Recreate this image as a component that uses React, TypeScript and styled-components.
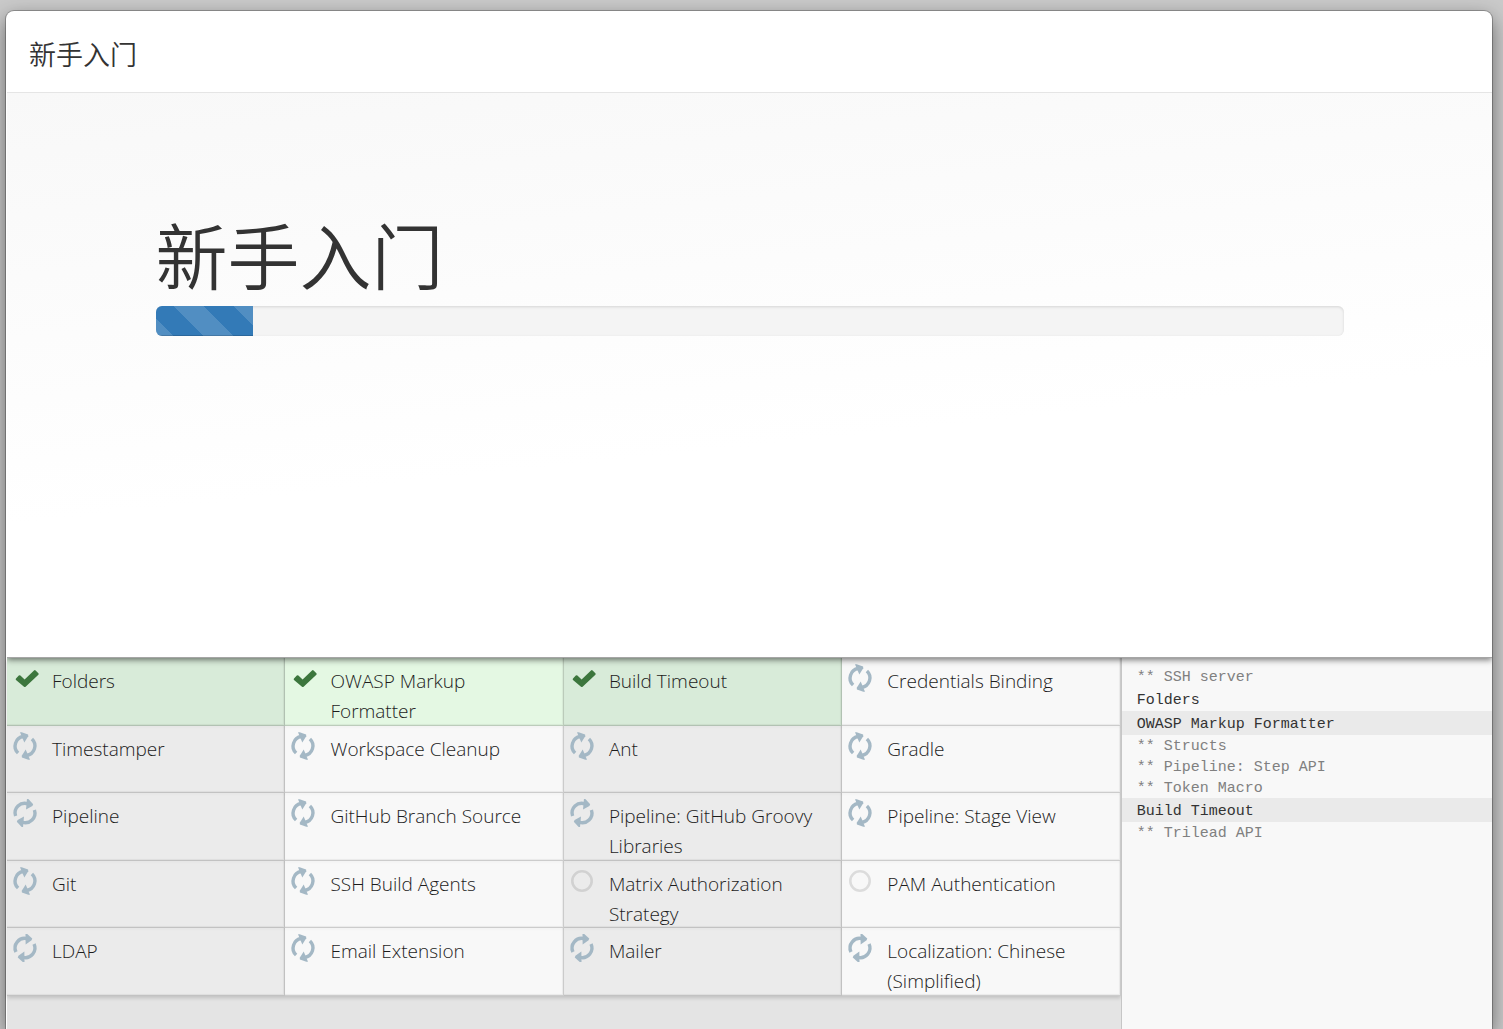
import React from "react";
import styled, { createGlobalStyle } from "styled-components";

type Status = "success" | "installing" | "pending";

interface Plugin {
  name: string;
  status: Status;
  angle?: number;
}

interface LogLine {
  text: string;
  dependency?: boolean;
  shaded?: boolean;
}

const plugins: Plugin[] = [
  { name: "Folders", status: "success" },
  { name: "OWASP Markup Formatter", status: "success" },
  { name: "Build Timeout", status: "success" },
  { name: "Credentials Binding", status: "installing", angle: -28 },
  { name: "Timestamper", status: "installing", angle: -28 },
  { name: "Workspace Cleanup", status: "installing", angle: -28 },
  { name: "Ant", status: "installing", angle: -28 },
  { name: "Gradle", status: "installing", angle: -28 },
  { name: "Pipeline", status: "installing", angle: 0 },
  { name: "GitHub Branch Source", status: "installing", angle: -28 },
  { name: "Pipeline: GitHub Groovy Libraries", status: "installing", angle: 0 },
  { name: "Pipeline: Stage View", status: "installing", angle: -28 },
  { name: "Git", status: "installing", angle: -28 },
  { name: "SSH Build Agents", status: "installing", angle: -28 },
  { name: "Matrix Authorization Strategy", status: "pending" },
  { name: "PAM Authentication", status: "pending" },
  { name: "LDAP", status: "installing", angle: -6 },
  { name: "Email Extension", status: "installing", angle: -28 },
  { name: "Mailer", status: "installing", angle: -6 },
  { name: "Localization: Chinese (Simplified)", status: "installing", angle: -6 },
];

const log: LogLine[] = [
  { text: "** SSH server", dependency: true },
  { text: "Folders" },
  { text: "OWASP Markup Formatter", shaded: true },
  { text: "** Structs", dependency: true },
  { text: "** Pipeline: Step API", dependency: true },
  { text: "** Token Macro", dependency: true },
  { text: "Build Timeout", shaded: true },
  { text: "** Trilead API", dependency: true },
];

const GlobalStyle = createGlobalStyle`
  *, *::before, *::after { box-sizing: border-box; }
  body {
    margin: 0;
    background: #cacaca;
    color: #333;
    font-family: "Open Sans", "Noto Sans CJK SC", sans-serif;
  }
`;

const Page = styled.div`
  display: flex;
  height: 100vh;
  padding: 11px 11px 0 6px;
  overflow: hidden;
`;

const Dialog = styled.main`
  flex: 1;
  min-width: 0;
  display: flex;
  flex-direction: column;
  padding-left: 1px;
  background: #fff;
  border-radius: 8px 8px 0 0;
  box-shadow: 0 0 0 1px rgba(0, 0, 0, 0.25), 0 7px 20px rgba(0, 0, 0, 0.5);
`;

const Header = styled.header`
  padding: 26px 22px 22px;
  border-bottom: 1px solid #e5e5e5;
`;

const HeaderTitle = styled.h4`
  margin: 0;
  font-family: "Noto Sans CJK SC", sans-serif;
  font-size: 27px;
  font-weight: 350;
  line-height: 33px;
`;

const Hero = styled.section`
  position: relative;
  z-index: 1;
  min-height: 565px;
  padding: 124px 10% 0;
  background: linear-gradient(-6deg, #fff 40%, #f8f8f8);
  border-bottom: 1px solid #a6a6a6;
  box-shadow: 0 2px 6px rgba(0, 0, 0, 0.5);
  clip-path: inset(0 0 -10px 0);
`;

const HeroTitle = styled.h1`
  margin: 0 0 17px;
  font-family: "Noto Sans CJK SC", sans-serif;
  font-size: 72px;
  font-weight: 350;
  line-height: 72px;
`;

const Track = styled.div`
  height: 30px;
  overflow: hidden;
  border-radius: 6px;
  background: #f4f4f4;
  box-shadow: inset 0 1px 3px rgba(0, 0, 0, 0.12);
`;

const Bar = styled.div`
  height: 100%;
  background-color: #337ab7;
  background-image: linear-gradient(
    45deg,
    rgba(255, 255, 255, 0.15) 25%,
    transparent 25%,
    transparent 50%,
    rgba(255, 255, 255, 0.15) 50%,
    rgba(255, 255, 255, 0.15) 75%,
    transparent 75%
  );
  background-size: 60px 60px;
  background-position: 18px 0;
  box-shadow: inset 0 -1px 0 rgba(0, 0, 0, 0.15);
`;

const Progress = styled.div`
  flex: 1;
  min-height: 0;
  display: grid;
  grid-template-columns: 3fr 1fr;
`;

const PluginArea = styled.div`
  background: #e4e4e4;
`;

const PluginGrid = styled.ul`
  display: grid;
  grid-template-columns: repeat(4, 1fr);
  grid-template-rows: repeat(5, minmax(0, 1fr));
  height: 338px;
  margin: 0;
  padding: 0;
  list-style: none;
  box-shadow: 0 2px 4px rgba(0, 0, 0, 0.16);
`;

const PluginCell = styled.li<{ $done: boolean }>`
  display: grid;
  grid-template-columns: 24px 1fr;
  column-gap: 15px;
  padding: 8px 24px 0 6px;
  font-size: 19px;
  font-weight: 320;
  line-height: 30px;
  color: #1c1c1c;
  background: ${(p) => (p.$done ? "#e4f8e3" : "#f8f8f8")};
  box-shadow: inset -1px -1px 0 rgba(0, 0, 0, 0.12),
    inset -2px -2px 1px rgba(0, 0, 0, 0.06), inset 0 2px 2px rgba(0, 0, 0, 0.02);

  &:nth-child(odd) {
    background: ${(p) => (p.$done ? "#d8ebd9" : "#ebebeb")};
  }
`;

const IconBox = styled.span`
  height: 24px;
  display: flex;
  align-items: center;
  justify-content: center;
`;

const Icon = styled.svg`
  display: block;
  flex: none;
  width: 28px;
  height: 28px;
`;

const LogPanel = styled.div`
  padding-top: 8px;
  background: #f8f8f8;
  border-left: 1px solid #c6c6c6;
  font-family: "Liberation Mono", monospace;
  font-size: 15px;
`;

const LogRow = styled.div<{ $dependency?: boolean; $shaded?: boolean }>`
  padding: ${(p) => (p.$dependency ? "2px" : "3px")} 15px 0;
  line-height: ${(p) => (p.$dependency ? "19px" : "21px")};
  color: ${(p) => (p.$dependency ? "#808080" : "#333")};
  background: ${(p) => (p.$shaded ? "#eaeaea" : "transparent")};
`;

function StatusIcon({ status, angle = 0 }: { status: Status; angle?: number }) {
  if (status === "success") {
    return (
      <Icon viewBox="0 0 28 28" aria-hidden="true">
        <path
          d="M5 14.4 7.8 11.6Q8.6 11 9.4 11.6L13.6 15.6 23 6.4Q23.8 5.8 24.6 6.4L27.4 9.2Q28 10 27.4 10.7L14.6 22.8Q13.8 23.4 13 22.8L5 16Q4.3 15.2 5 14.4Z"
          fill="#3c763d"
        />
      </Icon>
    );
  }
  if (status === "pending") {
    return (
      <Icon viewBox="0 0 28 28" aria-hidden="true">
        <circle cx="14" cy="14" r="9.7" fill="none" stroke="#000" strokeOpacity="0.11" strokeWidth="2.6" />
      </Icon>
    );
  }
  return (
    <Icon viewBox="0 0 28 28" aria-hidden="true">
      <g transform={`rotate(${angle} 14 14)`} fill="#a4b8c5">
        <path d="M4.6 17A9.6 9.6 0 0 1 17 4.9" fill="none" stroke="#a4b8c5" strokeWidth="3.4" />
        <path d="M16 -0.4 17.6 0.2 22.2 5.2 21.4 7 15 10.6Z" />
        <path d="M23.4 11A9.6 9.6 0 0 1 11 23.1" fill="none" stroke="#a4b8c5" strokeWidth="3.4" />
        <path d="M12 28.4 10.4 27.8 5.8 22.8 6.6 21 13 17.4Z" />
      </g>
    </Icon>
  );
}

export default function App() {
  const percent = 8.2;
  return (
    <>
      <GlobalStyle />
      <Page>
        <Dialog>
          <Header>
            <HeaderTitle>新手入门</HeaderTitle>
          </Header>
          <Hero>
            <HeroTitle>新手入门</HeroTitle>
            <Track role="progressbar" aria-label="新手入门" aria-valuenow={percent} aria-valuemin={0} aria-valuemax={100}>
              <Bar style={{ width: `${percent}%` }} />
            </Track>
          </Hero>
          <Progress>
            <PluginArea>
              <PluginGrid>
                {plugins.map((plugin) => (
                  <PluginCell key={plugin.name} $done={plugin.status === "success"}>
                    <IconBox>
                      <StatusIcon status={plugin.status} angle={plugin.angle} />
                    </IconBox>
                    <span>{plugin.name}</span>
                  </PluginCell>
                ))}
              </PluginGrid>
            </PluginArea>
            <LogPanel>
              {log.map((line) => (
                <LogRow key={line.text} $dependency={line.dependency} $shaded={line.shaded}>
                  {line.text}
                </LogRow>
              ))}
            </LogPanel>
          </Progress>
        </Dialog>
      </Page>
    </>
  );
}
